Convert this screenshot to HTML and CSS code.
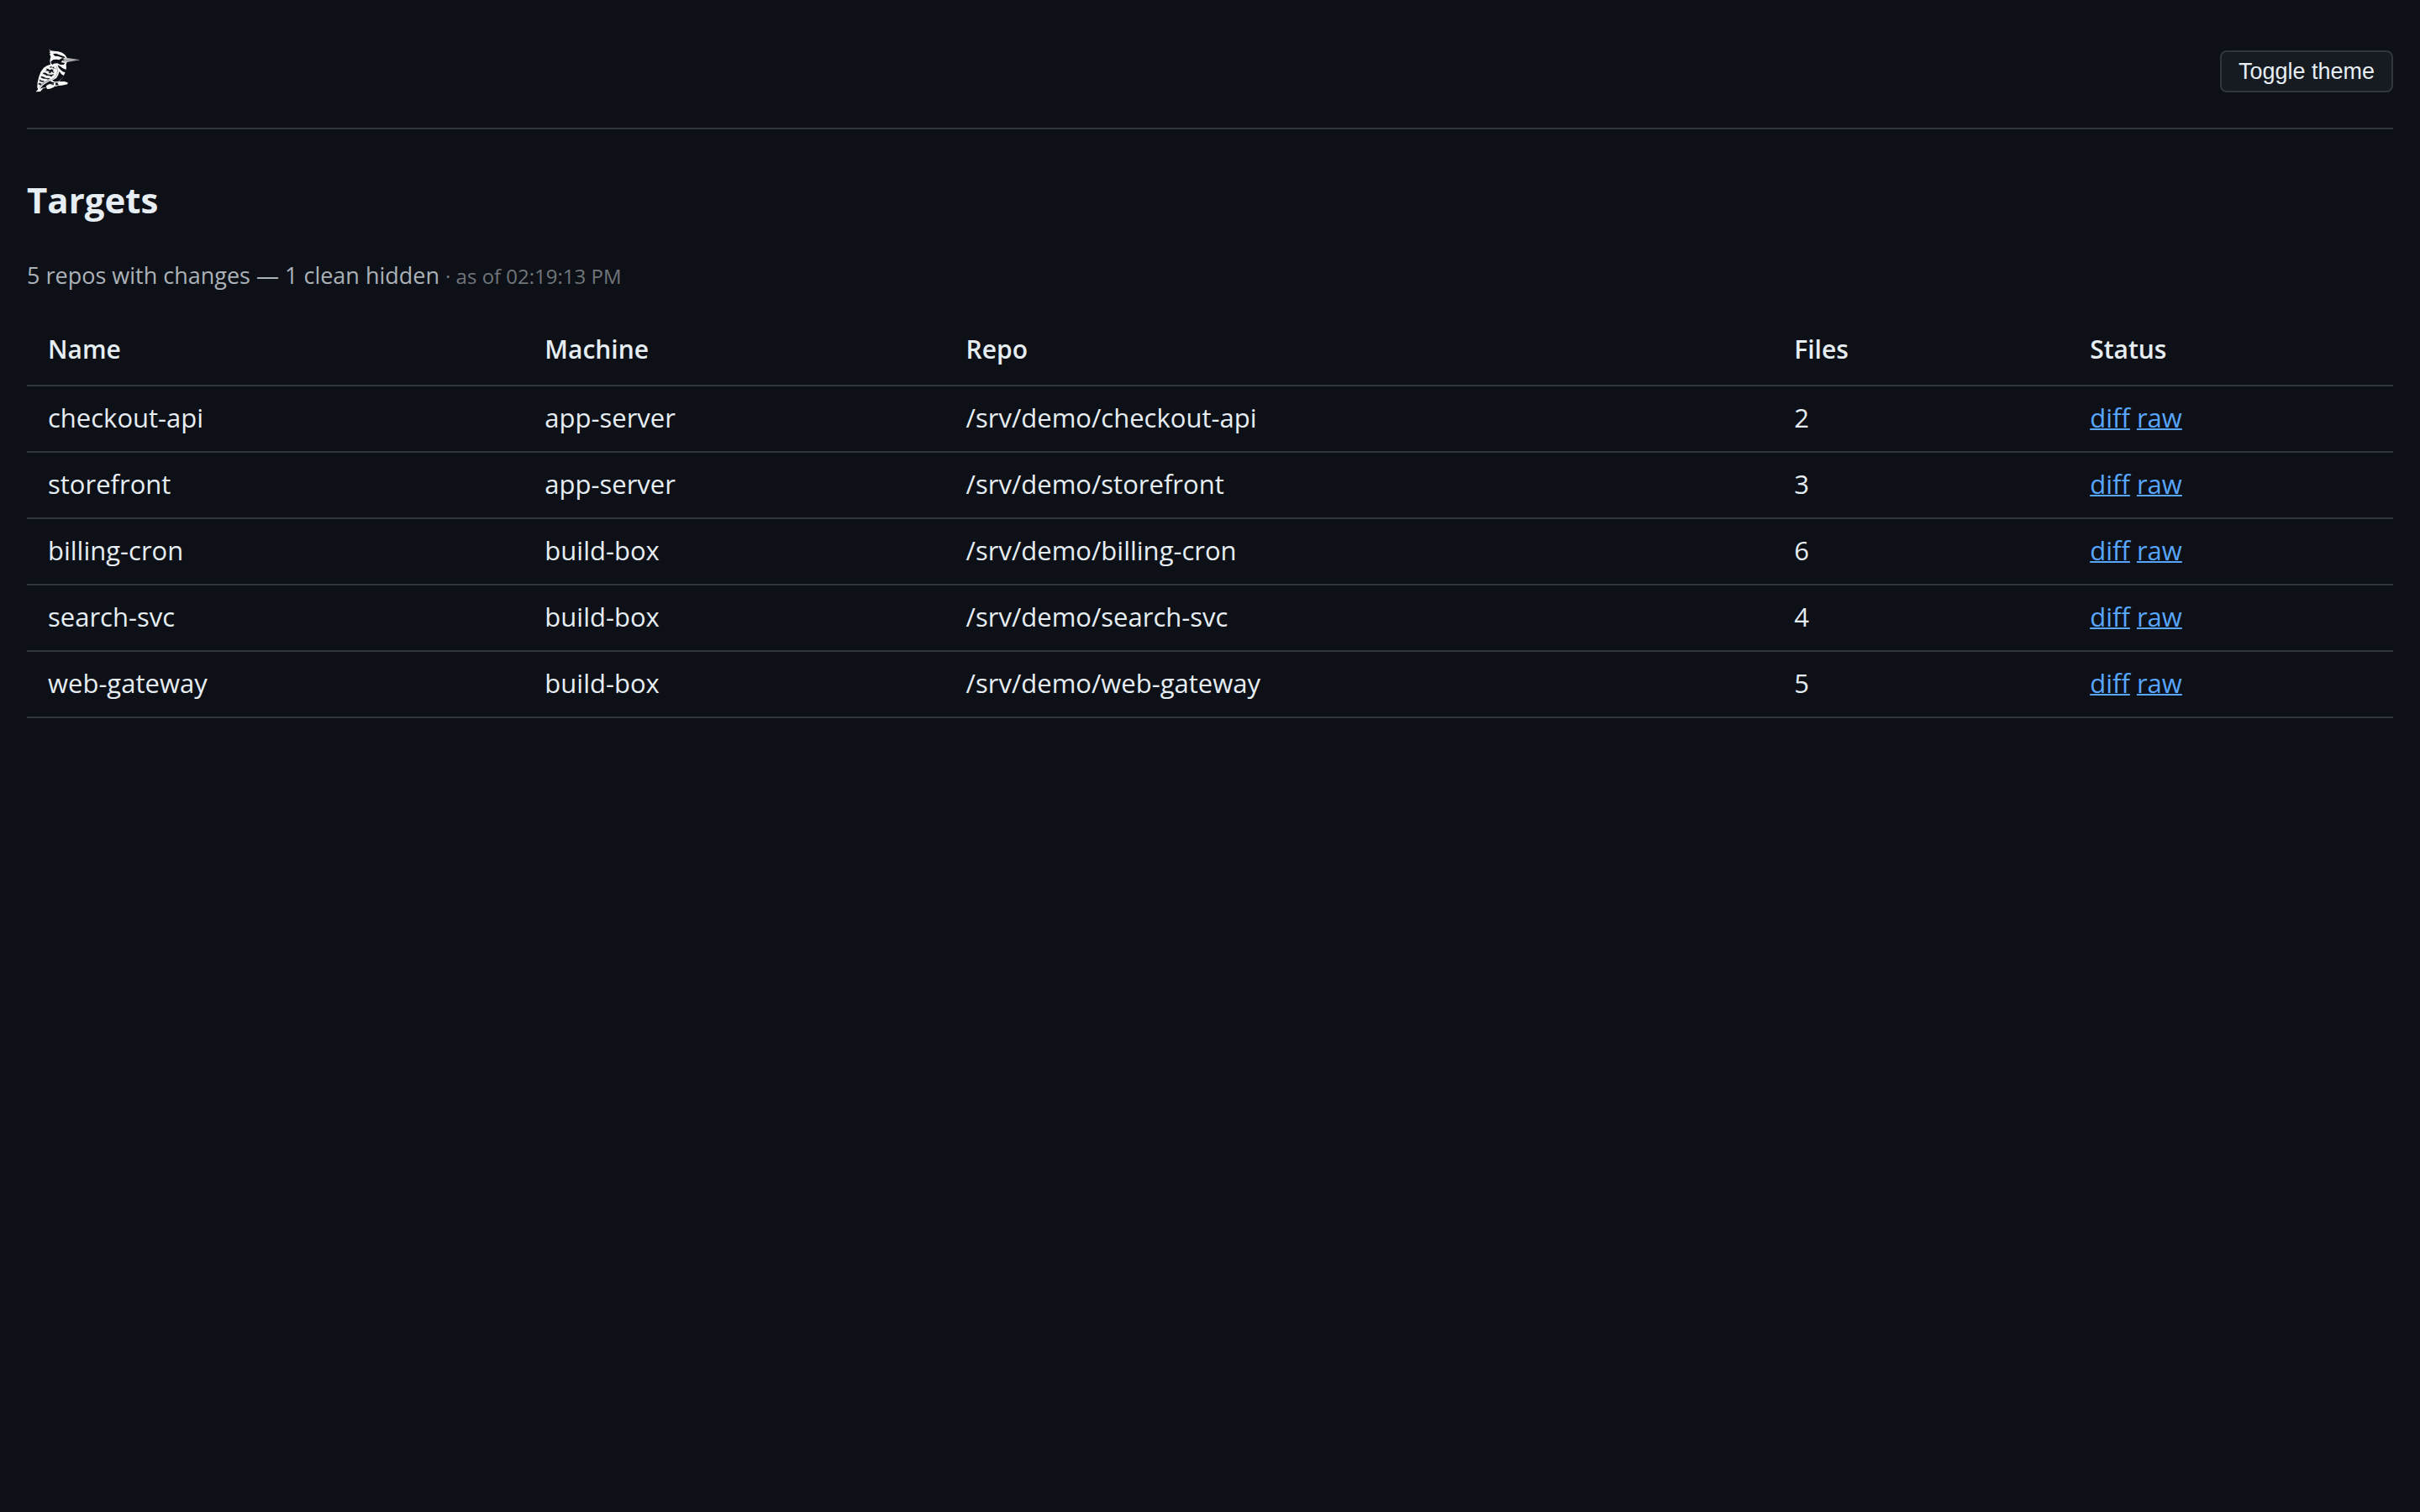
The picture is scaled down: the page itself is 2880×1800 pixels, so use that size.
FILE: index.html
```html
<!DOCTYPE html>
<html lang="en">
<head>
<meta charset="utf-8">
<meta name="viewport" content="width=device-width, initial-scale=1">
<title>Targets</title>
<link rel="stylesheet" href="styles.css">
</head>
<body>
<header class="site-header">
  <a class="logo" href="#" aria-label="Home">
    <svg class="logo-bird" viewBox="6 9 192 192" aria-hidden="true">
      <path fill="#f8f8f8" d="M84 25L91 31L102 32L118 34L132 38L142 46L149 56L150 70L146 80L147 92L143 108L136 124L128 134L120 141L140 141L152 145L151 151L130 155L116 156L113 158L104 158L101 150L88 153L105 154L103 161L88 167L78 168L76 162L64 166L54 177L38 178L46 169L43 162L44 145L49 124L56 106L66 92L77 85L90 80L88 66L91 52L87 43L91 40L85 36L90 34Z"/>
      <path fill="#c4c2c4" d="M142 56L165 59L195 64L165 69L145 73L130 70L136 63Z"/>
      <g fill="#0d1117">
        <path d="M99 43L110 41L126 47L139 52L143 57L133 56L118 51L106 50Z"/>
        <path d="M92 69L101 63L112 62L121 64L131 58L138 58L136 62L144 64L132 66L128 73L142 75L137 81L125 81L115 76L102 77L97 81L92 76Z"/>
        <path d="M116 82L125 87L134 94L146 99L144 109L134 106L126 99L119 91Z"/>
        <path d="M122 105L129 115L139 121L129 133L118 141L105 142L96 137L111 129L118 118Z"/>
        <path d="M88 139L96 143L105 145L101 149L87 150L76 155L75 161L60 164L52 168L64 154Z"/>
        <path d="M108 145L119 146L115 150L121 153L109 155Z"/>
      </g>
      <g fill="#0d1117" stroke="#f8f8f8" stroke-width="2">
        <path d="M92 86L97 86L95 90L101 88L106 90L103 93L109 93L111 98L106 95L101 96L97 92L90 93L85 90Z"/>
        <path d="M73 93L82 95L87 99L94 96L103 99L99 104L106 107L100 111L93 107L91 113L82 111L85 106L77 104L70 105L76 99Z"/>
        <path d="M65 108L73 109L80 114L91 116L100 114L105 118L98 120L94 125L85 121L76 121L68 116L61 115Z"/>
        <path d="M57 121L67 124L76 128L86 128L90 131L81 135L72 132L65 132L54 127Z"/>
        <path d="M51 133L60 137L70 138L64 145L50 141Z"/>
        <path d="M48 145L60 148L56 155L46 152Z"/>
      </g>
      <g fill="none" stroke="#0d1117" stroke-width="1">
        <path d="M48 164L61 151L83 138M53 157L69 143L91 133"/>
        <path d="M112 86Q120 104 112 118Q106 129 91 136"/>
      </g>
      <path fill="none" stroke="#77767a" stroke-width="2" d="M143 65L192 65"/>
    </svg>
  </a>
  <button class="theme-toggle" type="button">Toggle theme</button>
</header>
<main>
  <h1 class="title">Targets</h1>
  <p class="summary">5 repos with changes — 1 clean hidden <span class="as-of">· as of 02:19:13 PM</span></p>
  <table class="targets">
    <colgroup>
      <col class="col-name"><col class="col-machine"><col class="col-repo"><col class="col-files"><col class="col-status">
    </colgroup>
    <thead>
      <tr><th scope="col">Name</th><th scope="col">Machine</th><th scope="col">Repo</th><th scope="col">Files</th><th scope="col">Status</th></tr>
    </thead>
    <tbody>
      <tr><td>checkout-api</td><td>app-server</td><td>/srv/demo/checkout-api</td><td>2</td><td><a href="#">diff</a> <a href="#">raw</a></td></tr>
      <tr><td>storefront</td><td>app-server</td><td>/srv/demo/storefront</td><td>3</td><td><a href="#">diff</a> <a href="#">raw</a></td></tr>
      <tr><td>billing-cron</td><td>build-box</td><td>/srv/demo/billing-cron</td><td>6</td><td><a href="#">diff</a> <a href="#">raw</a></td></tr>
      <tr><td>search-svc</td><td>build-box</td><td>/srv/demo/search-svc</td><td>4</td><td><a href="#">diff</a> <a href="#">raw</a></td></tr>
      <tr><td>web-gateway</td><td>build-box</td><td>/srv/demo/web-gateway</td><td>5</td><td><a href="#">diff</a> <a href="#">raw</a></td></tr>
    </tbody>
  </table>
</main>
</body>
</html>
```
FILE: styles.css
```css
body {
  margin: 0;
  padding: 0 32px;
  background: #0d1117;
  color: #e6edf3;
  font-family: "Segoe UI", "Open Sans", "Noto Sans", sans-serif;
  font-size: 31px;
  line-height: 45px;
}

.site-header {
  display: flex;
  align-items: center;
  justify-content: space-between;
  padding: 53px 0 35px;
  border-bottom: 2px solid #30363d;
}

.logo,
.logo-bird {
  display: block;
  width: 64px;
  height: 64px;
}

.theme-toggle {
  padding: 7px 20px;
  border: 2px solid #30363d;
  border-radius: 8px;
  background: #161b22;
  color: #e6edf3;
  font-family: Arial, "Liberation Sans", sans-serif;
  font-size: 27px;
  line-height: 32px;
  cursor: pointer;
}

.title {
  margin: 54px 0 40px;
  font-size: 42px;
  font-weight: 700;
  line-height: 60px;
}

.summary {
  margin: 0 0 30px;
  color: #abb1b7;
  font-size: 27px;
  line-height: 40px;
}

.as-of {
  color: #70757b;
  font-size: 24px;
}

.targets {
  width: 100%;
  table-layout: fixed;
  border-collapse: separate;
  border-spacing: 0;
}

.col-name { width: 21%; }
.col-machine { width: 17.8%; }
.col-repo { width: 35%; }
.col-files { width: 12.5%; }

.targets th,
.targets td {
  padding: 15px 25px 17px;
  border-bottom: 2px solid #30363d;
  text-align: left;
}

.targets th {
  padding: 14px 25px 20px;
  font-size: 30px;
  font-weight: 600;
}

.targets a {
  color: #58a6ff;
  text-decoration-thickness: 2px;
}
```
